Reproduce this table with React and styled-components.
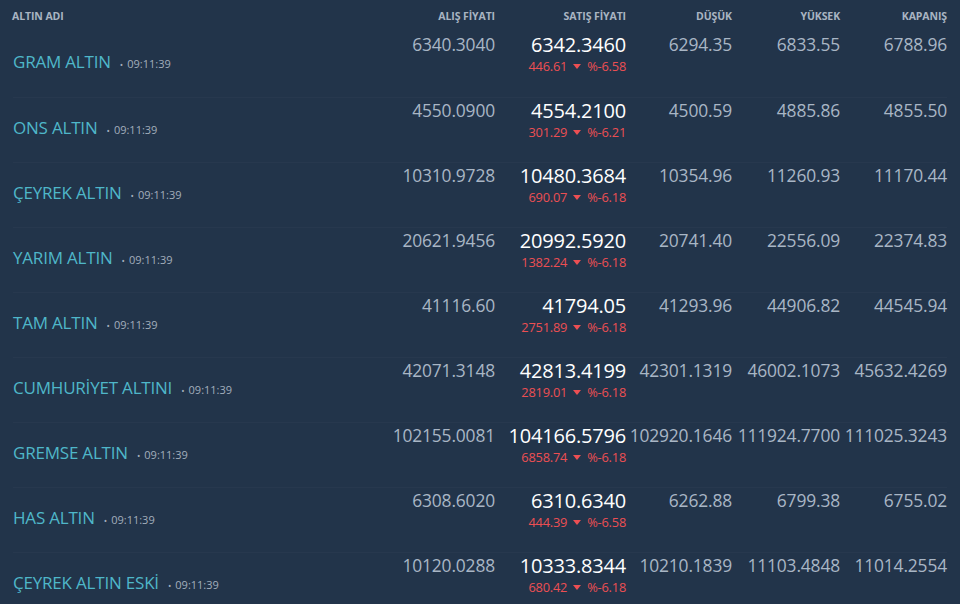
import React from "react";
import styled, { createGlobalStyle } from "styled-components";

const Global = createGlobalStyle`
  html, body {
    margin: 0;
    background: #22344a;
  }
  body {
    font-family: "Open Sans", "Noto Sans", sans-serif;
  }
`;

const rows = [
  { name: "GRAM ALTIN", buy: "6340.3040", sell: "6342.3460", diff: "446.61", pct: "%-6.58", low: "6294.35", high: "6833.55", close: "6788.96" },
  { name: "ONS ALTIN", buy: "4550.0900", sell: "4554.2100", diff: "301.29", pct: "%-6.21", low: "4500.59", high: "4885.86", close: "4855.50" },
  { name: "ÇEYREK ALTIN", buy: "10310.9728", sell: "10480.3684", diff: "690.07", pct: "%-6.18", low: "10354.96", high: "11260.93", close: "11170.44" },
  { name: "YARIM ALTIN", buy: "20621.9456", sell: "20992.5920", diff: "1382.24", pct: "%-6.18", low: "20741.40", high: "22556.09", close: "22374.83" },
  { name: "TAM ALTIN", buy: "41116.60", sell: "41794.05", diff: "2751.89", pct: "%-6.18", low: "41293.96", high: "44906.82", close: "44545.94" },
  { name: "CUMHURİYET ALTINI", buy: "42071.3148", sell: "42813.4199", diff: "2819.01", pct: "%-6.18", low: "42301.1319", high: "46002.1073", close: "45632.4269" },
  { name: "GREMSE ALTIN", buy: "102155.0081", sell: "104166.5796", diff: "6858.74", pct: "%-6.18", low: "102920.1646", high: "111924.7700", close: "111025.3243" },
  { name: "HAS ALTIN", buy: "6308.6020", sell: "6310.6340", diff: "444.39", pct: "%-6.58", low: "6262.88", high: "6799.38", close: "6755.02" },
  { name: "ÇEYREK ALTIN ESKİ", buy: "10120.0288", sell: "10333.8344", diff: "680.42", pct: "%-6.18", low: "10210.1839", high: "11103.4848", close: "11014.2554" },
];

const Table = styled.div`
  padding: 0 13px;
  width: 960px;
  box-sizing: border-box;
`;

const Grid = styled.div`
  display: grid;
  grid-template-columns: 1fr 110px 131px 106px 108px 107px;
  align-items: start;
`;

const Head = styled(Grid)`
  height: 32px;
  align-items: center;
`;

const HeadCell = styled.div`
  font-size: 10.5px;
  font-weight: 700;
  color: #a9b4c2;
  text-align: ${(p) => (p.$left ? "left" : "right")};
  margin-left: ${(p) => (p.$left ? "-1px" : "0")};
  letter-spacing: -0.1px;
`;

const Row = styled(Grid)`
  height: 65px;
  box-sizing: border-box;
  border-top: ${(p) => (p.$first ? "none" : "1px solid rgba(255,255,255,0.025)")};
`;

const NameCell = styled.div`
  display: flex;
  align-items: baseline;
  gap: 9px;
  padding-top: 18px;
  white-space: nowrap;
`;

const Name = styled.span`
  color: #4fb7c9;
  font-size: 17px;
  line-height: 23px;
  letter-spacing: -0.2px;
`;

const Time = styled.span`
  color: #a3aebc;
  font-size: 11px;
  &::before {
    content: "•";
    margin-right: 4px;
    font-size: 9px;
  }
`;

const Value = styled.div`
  text-align: right;
  color: #a9b6c5;
  font-size: 17.4px;
  line-height: 20px;
  padding-top: 2px;
  letter-spacing: -0.15px;
  white-space: nowrap;
`;

const SellCell = styled.div`
  text-align: right;
  padding-top: 2px;
  white-space: nowrap;
`;

const Sell = styled.div`
  color: #ffffff;
  font-size: 20px;
  line-height: 22px;
  letter-spacing: -0.2px;
`;

const Change = styled.div`
  color: #ec4f53;
  font-size: 12.8px;
  line-height: 14px;
  margin-top: 3px;
  letter-spacing: -0.2px;
  display: flex;
  justify-content: flex-end;
  align-items: center;
  gap: 6px;
`;

const Caret = () => (
  <svg width="8" height="5" viewBox="0 0 8 5">
    <path d="M0 0h8L4 5z" fill="#ec4f53" />
  </svg>
);

export default function App() {
  return (
    <>
      <Global />
      <Table>
        <Head>
          <HeadCell $left>ALTIN ADI</HeadCell>
          <HeadCell>ALIŞ FİYATI</HeadCell>
          <HeadCell>SATIŞ FİYATI</HeadCell>
          <HeadCell>DÜŞÜK</HeadCell>
          <HeadCell>YÜKSEK</HeadCell>
          <HeadCell>KAPANIŞ</HeadCell>
        </Head>
        {rows.map((r, i) => (
          <Row key={r.name} $first={i === 0}>
            <NameCell>
              <Name>{r.name}</Name>
              <Time>09:11:39</Time>
            </NameCell>
            <Value>{r.buy}</Value>
            <SellCell>
              <Sell>{r.sell}</Sell>
              <Change>
                <span>{r.diff}</span>
                <Caret />
                <span>{r.pct}</span>
              </Change>
            </SellCell>
            <Value>{r.low}</Value>
            <Value>{r.high}</Value>
            <Value>{r.close}</Value>
          </Row>
        ))}
      </Table>
    </>
  );
}
